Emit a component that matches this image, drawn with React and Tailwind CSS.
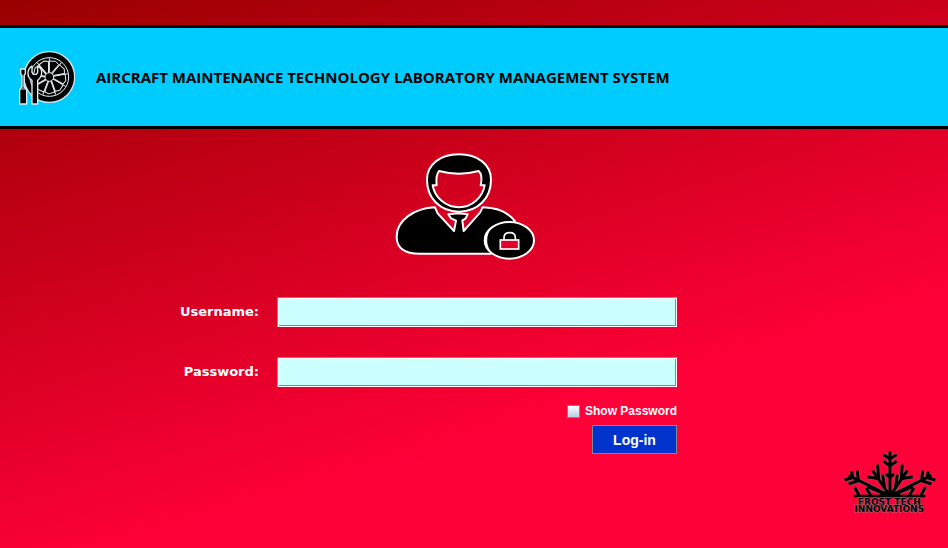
const BLADES = [0, 40, 80, 120, 160, 200, 240, 280, 320];

function EngineLogo() {
  return (
    <svg viewBox="58 89 168 168" className="size-14 shrink-0" aria-hidden="true">
      <circle cx="149" cy="173" r="76" fill="#000" stroke="#d8e6ea" strokeWidth="4" />
      <circle cx="149" cy="173" r="58" fill="#000" stroke="#e8f4f6" strokeWidth="3" />
      {BLADES.map((angle) => (
        <path
          key={angle}
          transform={`rotate(${angle} 149 173)`}
          d="M149 160V117M149 125L168 126L177 136L155 162"
          fill="none"
          stroke="#e8f4f6"
          strokeWidth="3"
          strokeLinejoin="round"
        />
      ))}
      <circle cx="149" cy="173" r="13" fill="#000" stroke="#e8f4f6" strokeWidth="3" />
      <g fill="#000" stroke="#e0eef0" strokeWidth="4" strokeLinejoin="round">
        <path d="M63 149H77V163L73 169V203L81 211V254H60V211L67 203V169L63 163Z" />
        <path d="M97 254V183C87 177 84 168 85 158C86 149 91 144 97 140V159L101 165H110L114 159V140C121 144 126 150 126 159C126 170 121 178 114 183V254Z" />
      </g>
      <path d="M62 209H80" stroke="#c8d4d8" strokeWidth="3" />
    </svg>
  );
}

function UserLockIcon() {
  return (
    <svg viewBox="30 25 420 321" className="h-[107px] w-[140px]" aria-hidden="true">
      <g fill="#000" stroke="#fff" strokeWidth="6" strokeLinejoin="round" fillRule="evenodd">
        <path d="M150 188C88 191 35 226 35 276C35 312 60 327 105 327H318L390 230C370 202 332 189 293 188L285 204L236 259L232 228L242 221L248 209L220 206L190 209L198 221L213 228L207 259L158 206Z" />
        <path d="M222 29C165 29 126 60 126 105C126 160 165 201 222 201C279 201 318 160 318 105C318 60 279 29 222 29ZM162 79Q222 95 281 79C290 87 291 104 287 122H299C292 158 262 188 222 188C182 188 149 158 143 122H155C153 103 155 88 162 79Z" />
        <ellipse cx="373" cy="287" rx="74" ry="55" />
      </g>
      <path d="M322 247C287 270 290 309 324 329C301 304 301 272 322 247Z" fill="#fff" />
      <path d="M357 285V279Q357 264 374 264Q391 264 391 279V285" fill="#000" stroke="#fff" strokeWidth="5" />
      <rect x="346" y="286" width="55" height="27" fill="#e0002a" stroke="#fff" strokeWidth="5" />
    </svg>
  );
}

const CENTER_ARM = "M156 150V16M136 26L156 38L176 26M136 46L156 60L176 46M144 84L156 94L168 84";
const SIDE_ARM =
  "M156 150L32 88M41 76L44 95L20 102M58 74L61 104L32 114M156 150L104 74M119 56L122 98L88 92M50 124L63 148M84 126L98 148M156 150L88 122M134 86L140 128";

function Snowflake() {
  return (
    <>
      <path d={CENTER_ARM} />
      <path d={SIDE_ARM} />
      <path d={SIDE_ARM} transform="translate(312 0) scale(-1 1)" />
    </>
  );
}

function FrostTechLogo() {
  return (
    <svg viewBox="18 12 276 192" className="h-16 w-[92px]" role="img" aria-label="Frost Tech Innovations">
      <g fill="none" stroke="#a5505e" strokeWidth="13">
        <Snowflake />
      </g>
      <g fill="none" stroke="#000" strokeWidth="9">
        <Snowflake />
      </g>
      <path d="M118 150Q156 118 194 150Z" />
      <path d="M46 146H262V154H46Z" />
      <text
        className="font-['DejaVu_Sans'] font-bold [paint-order:stroke]"
        fill="#000"
        stroke="#a0707a"
        strokeWidth="3"
        textAnchor="middle"
        fontSize="27"
      >
        <tspan x="154" y="177">FROST TECH</tspan>
        <tspan x="154" y="199">INNOVATIONS</tspan>
      </text>
    </svg>
  );
}

const LABEL = "text-right font-['DejaVu_Sans',sans-serif] text-[13px] leading-5 font-bold";
const FIELD =
  "h-[30px] w-full border border-t-[#7a8a99] border-l-[#7a8a99] border-r-white border-b-white bg-[#ccffff] px-2 text-sm text-black shadow-[inset_1px_1px_0_#fff,inset_-1px_-1px_0_#7a8a99] outline-none";

export default function App() {
  return (
    <div className="flex min-h-screen flex-col bg-[linear-gradient(163deg,#990000_0px,#ff0038_564px)] pt-[25px] font-['Liberation_Sans',Arial,sans-serif] text-white">
      <header className="flex items-center gap-[21px] border-y-[3px] border-black bg-[#00ccff] py-[21px] pl-[19px] text-black">
        <EngineLogo />
        <h1 className="font-['Open_Sans','Noto_Sans',sans-serif] text-[15px] leading-5 font-bold">
          AIRCRAFT MAINTENANCE TECHNOLOGY LABORATORY MANAGEMENT SYSTEM
        </h1>
      </header>

      <main className="flex grow flex-col pt-6">
        <div className="flex justify-center pr-[18px]">
          <UserLockIcon />
        </div>
        <form
          className="mt-[37px] grid grid-cols-[259fr_400fr_253fr] items-center gap-x-[18px] gap-y-[30px]"
          onSubmit={(event) => event.preventDefault()}
        >
          <label htmlFor="username" className={LABEL}>Username:</label>
          <input id="username" type="text" className={FIELD} />
          <label htmlFor="password" className={`${LABEL} col-start-1`}>Password:</label>
          <input id="password" type="password" className={FIELD} />
          <div className="col-start-2 -mt-3.5 flex flex-col items-end gap-1.5">
            <label className="flex items-center gap-[5px] text-xs font-bold">
              <input
                type="checkbox"
                className="size-[13px] appearance-none border border-[#7a8a99] bg-linear-to-b from-white to-[#b8cfe5]"
              />
              Show Password
            </label>
            <button type="submit" className="h-[29px] w-[85px] border border-[#7a8a99] bg-[#0033cc] text-sm font-bold">
              Log-in
            </button>
          </div>
        </form>
      </main>

      <footer className="-mt-1 flex justify-end pr-3 pb-9">
        <FrostTechLogo />
      </footer>
    </div>
  );
}
